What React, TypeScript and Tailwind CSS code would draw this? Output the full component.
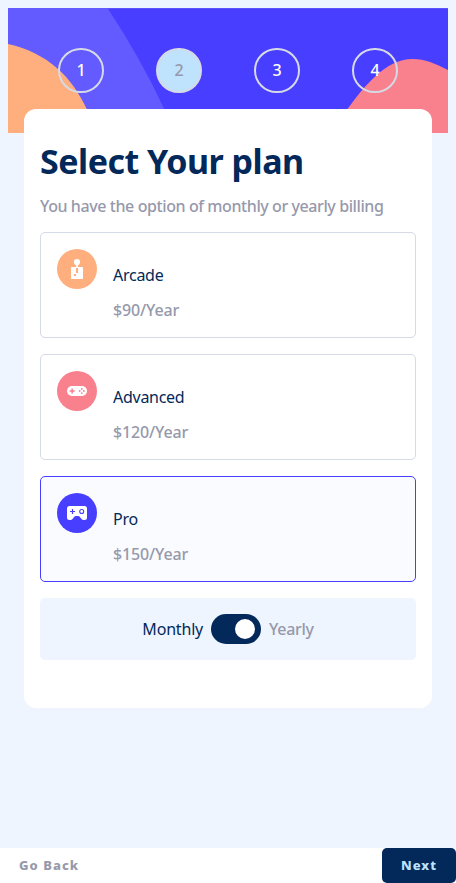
import React from "react";

function HeaderArt() {
  return (
    <svg className="absolute inset-0 h-full w-full" viewBox="0 0 440 125" aria-hidden="true">
      <path fill="#483eff" d="M0 0h440v125H0z" />
      <path fill="#635aff" d="M0 0H440V.7H100Q132 49 156.500 101.500L167 125H0z" />
      <path fill="#ffaf7e" d="M0 36C40 45 64 69 79 101.500Q84 112 87 125H0z" />
      <path fill="#f9818e" d="M324 125Q332 112 339.500 101C355 80 377 51 404.600 51C417 51 427 55.500 440 62V125z" />
    </svg>
  );
}

function ArcadeIcon() {
  return (
    <svg className="size-10" viewBox="0 0 40 40" aria-hidden="true">
      <circle cx="20" cy="20" r="20" fill="#ffaf7e" />
      <circle cx="20" cy="13.100" r="3.100" fill="#fff" />
      <path fill="#fff" d="M19.100 15h1.800v4h-1.800zM14.800 18H19v6h2v-6h4.200q.8 0 .8.800v10.400q0 .8-.8.800H14.800q-.8 0-.8-.8V18.800q0-.8.800-.8z" />
      <path fill="#ffaf7e" d="M17 25h2v2h-2z" />
    </svg>
  );
}

function AdvancedIcon() {
  return (
    <svg className="size-10" viewBox="0 0 40 40" aria-hidden="true">
      <circle cx="20" cy="20" r="20" fill="#f9818e" />
      <rect x="10" y="15" width="20" height="10" rx="5" fill="#fff" />
      <path fill="#f9818e" d="M14.400 17.500h1.500v1.800h1.800v1.500h-1.800v1.800h-1.500v-1.800h-1.800v-1.500h1.800z" />
      <g fill="#f9818e">
        <circle cx="24.800" cy="17.900" r=".9" />
        <circle cx="24.800" cy="22.100" r=".9" />
        <circle cx="22.700" cy="20" r=".9" />
        <circle cx="26.900" cy="20" r=".9" />
      </g>
    </svg>
  );
}

function ProIcon() {
  return (
    <svg className="size-10" viewBox="0 0 40 40" aria-hidden="true">
      <circle cx="20" cy="20" r="20" fill="#483eff" />
      <path fill="#fff" d="M12.500 13h15q2.500 0 2.500 2.500v9Q30 27 27.500 27h-1q-1.200 0-2-1l-2-2.400q-.5-.6-1.300-.6h-2.400q-.8 0-1.300.6L15.500 26q-.8 1-2 1h-1Q10 27 10 24.500v-9Q10 13 12.500 13z" />
      <path fill="#483eff" d="M14.900 16h1.200v1.900h1.900v1.200h-1.900V21h-1.200v-1.900H13v-1.200h1.900z" />
      <circle cx="24.700" cy="18.500" r="2" fill="none" stroke="#483eff" strokeWidth="1.100" />
    </svg>
  );
}

const plans = [
  { name: "Arcade", price: "$90/Year", icon: <ArcadeIcon />, selected: false },
  { name: "Advanced", price: "$120/Year", icon: <AdvancedIcon />, selected: false },
  { name: "Pro", price: "$150/Year", icon: <ProIcon />, selected: true },
];

export default function App() {
  return (
    <div className="flex h-[883px] flex-col bg-[#eef5ff] font-['Noto_Sans','Open_Sans',sans-serif] text-base leading-[18px] font-medium text-[#02295a]">
      <header className="relative mx-2 mt-2 h-[125px] shrink-0">
        <HeaderArt />
        <ol className="relative flex justify-center gap-[52px] pt-10">
          {[1, 2, 3, 4].map((step) => (
            <li
              key={step}
              className={`flex h-[45px] w-[46px] items-center justify-center rounded-full border-2 border-[#d6d9e6] pb-px ${
                step === 2 ? "bg-[#bfe2fd] text-[#9699ab]" : "text-white"
              }`}
            >
              {step}
            </li>
          ))}
        </ol>
      </header>

      <main className="relative mx-6 -mt-6 h-[599px] shrink-0 rounded-xl bg-white px-4 pt-[31px]">
        <h1 className="h-[42px] whitespace-nowrap text-[34px] leading-[42px] font-bold tracking-[-0.5px]">Select Your plan</h1>
        <p className="mt-[15px] whitespace-nowrap tracking-[-0.41px] text-[#9699ab]">You have the option of monthly or yearly billing</p>
        <div className="mt-[17px] flex flex-col gap-4">
          {plans.map((plan) => (
            <button
              key={plan.name}
              className={`flex h-[106px] gap-4 rounded-[5px] border p-4 text-left ${
                plan.selected ? "border-[#483eff] bg-[#fafbff]" : "border-[#d6d9e6]"
              }`}
            >
              {plan.icon}
              <span className="flex flex-col gap-[17px] pt-[17px]">
                <span className="font-normal tracking-[-0.27px]">{plan.name}</span>
                <span className="tracking-[-0.15px] text-[#9699ab]">{plan.price}</span>
              </span>
            </button>
          ))}
        </div>
        <div className="mt-4 flex h-[62px] items-center justify-center gap-2 rounded-[5px] bg-[#eef5ff]">
          <span className="font-normal tracking-[-0.18px]">Monthly</span>
          <span className="flex h-[30px] w-[50px] items-center justify-end rounded-full bg-[#02295a] pr-1.5">
            <span className="size-5 rounded-full bg-white" />
          </span>
          <span className="tracking-[-0.3px] text-[#9699ab]">Yearly</span>
        </div>
      </main>

      <footer className="mt-auto flex h-[35px] items-stretch justify-between bg-white text-[13px] font-extrabold">
        <button className="pb-0.5 pl-[19px] tracking-[1.05px] text-[#9699ab]">Go Back</button>
        <button className="w-[74px] rounded-[5px] bg-[#02295a] pb-0.5 tracking-[1.05px] text-[#bfe2fd]">Next</button>
      </footer>
    </div>
  );
}
